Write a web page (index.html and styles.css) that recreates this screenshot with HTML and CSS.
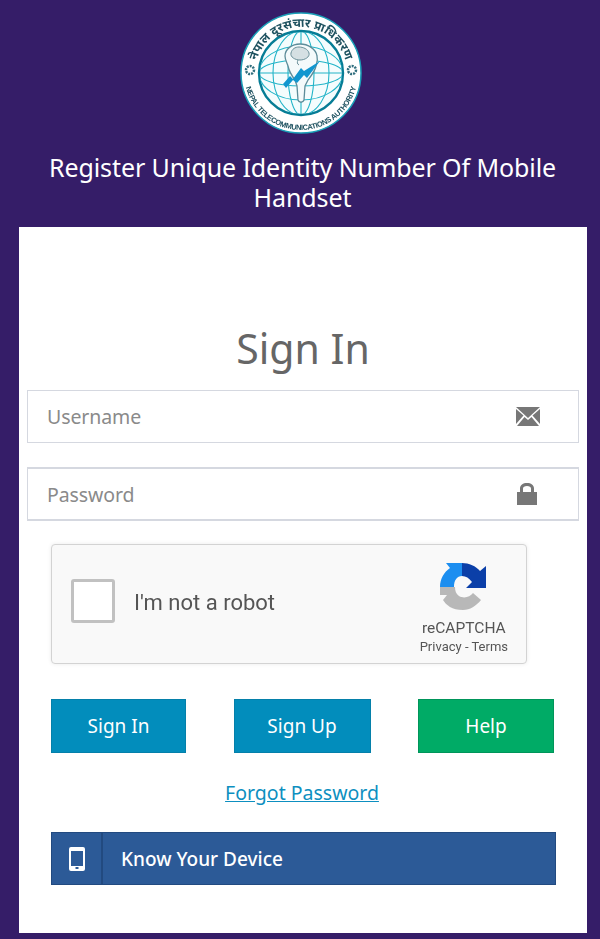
FILE: index.html
```html
<!DOCTYPE html>
<html lang="en">
<head>
<meta charset="utf-8">
<title>Sign In</title>
<link rel="stylesheet" href="styles.css">
</head>
<body>
<header class="top">
  <svg class="logo" viewBox="0 0 122 122" width="122" height="122">
    <defs>
      <path id="arcTop" d="M15 61a46 46 0 0 1 92 0"/>
      <path id="arcBot" d="M4 61a57 57 0 0 0 114 0"/>
      <clipPath id="globeClip"><circle cx="61" cy="61" r="41"/></clipPath>
    </defs>
    <circle cx="61" cy="61" r="60" fill="#fff" stroke="#1aa0b8" stroke-width="1.500"/>
    <circle cx="61" cy="61" r="42" fill="#f4fcfd" stroke="#067d96" stroke-width="2.400"/>
    <g clip-path="url(#globeClip)" fill="none" stroke="#22b4c8" stroke-width="1.100">
      <ellipse cx="61" cy="61" rx="42" ry="13"/>
      <ellipse cx="61" cy="61" rx="42" ry="27"/>
      <ellipse cx="61" cy="61" rx="13" ry="42"/>
      <ellipse cx="61" cy="61" rx="28" ry="42"/>
      <path d="M19 61h84M61 19v84"/>
    </g>
    <path d="M60 32c-8 0-15 5-15 12 0 4 2 7 3 10 1 5 4 10 7 14l2 6 1 14c1 3 5 3 6 0l1-14 3-6c3-4 7-9 8-14 1-4 2-6 1-10-1-7-9-12-17-12z" fill="#f4fafb" stroke="#5d8c99" stroke-width="1.300"/>
    <path d="M51 41c1-4 4-6 8-6s9 2 10 6c1 4-4 7-9 7s-10-3-9-7z" fill="#d5e0e3" stroke="#6a8f98"/>
    <path d="M58 48c-1 2-1 4 1 5" fill="none" stroke="#6a8f98"/>
    <path d="M43 72l7-8 3 3 8-11 3 3 16-10-13 17-3-3-7 8-4-3-7 8z" fill="#1196cf"/>
    <text class="logo-hi"><textPath href="#arcTop" startOffset="50%" text-anchor="middle">नेपाल दूरसंचार प्राधिकरण</textPath></text>
    <text class="logo-en"><textPath href="#arcBot" startOffset="50%" text-anchor="middle" textLength="150" lengthAdjust="spacing">NEPAL TELECOMMUNICATIONS AUTHORITY</textPath></text>
    <circle class="rosette" cx="10" cy="58" r="4"/>
    <circle class="rosette" cx="112" cy="58" r="4"/>
  </svg>
  <h1 class="site-title">Register Unique Identity Number Of Mobile Handset</h1>
</header>
<main class="card">
  <h2 class="heading">Sign In</h2>
  <div class="field">
    <span class="placeholder">Username</span>
    <svg class="field-icon" viewBox="0 0 24 19" width="24" height="19"><path fill="#777" d="M0 0h24L12 11zM0 2l7.500 6.500L0 17zM24 2l-7.500 6.500L24 17zM8.500 10l3.500 3 3.500-3 7.500 9H1z"/></svg>
  </div>
  <div class="field field-thick">
    <span class="placeholder">Password</span>
    <svg class="field-icon" viewBox="0 0 20 22" width="20" height="22"><path fill="#777" d="M0 9h20v13H0zM3 9V5.500C3 2 6 0 10 0s7 2 7 5.500V9h-3V5.500C14 4 12.500 3 10 3S6 4 6 5.500V9z"/></svg>
  </div>
  <div class="captcha">
    <span class="checkbox"></span>
    <span class="captcha-label">I'm not a robot</span>
    <div class="captcha-brand">
      <svg class="captcha-logo" viewBox="0 0 48 48" width="48" height="48">
        <path fill="#1c8ef0" d="M0 24C0 16 4 9 10 5L6 0H22V13C17 13 14 17 14 24Z"/>
        <path fill="#0b3fa8" d="M22 0C29 0 36 3 40 8L46 3V25H26L32 19C29 15 26 13 22 13Z"/>
        <path fill="#b8b8b8" d="M0 24H15C15 28 16 31 19 33C24 36 30 34 33 30L41 37C36 43 30 47 23 47C12 47 6 42 3 37L7 32H0Z"/>
      </svg>
      <span class="brand-name">reCAPTCHA</span>
      <span class="brand-links">Privacy - Terms</span>
    </div>
  </div>
  <div class="actions">
    <a class="btn btn-blue btn-a" href="#">Sign In</a>
    <a class="btn btn-blue btn-b" href="#">Sign Up</a>
    <a class="btn btn-green btn-c" href="#">Help</a>
  </div>
  <a class="forgot" href="#">Forgot Password</a>
  <a class="device" href="#">
    <span class="device-icon">
      <svg viewBox="0 0 16 24" width="16" height="24"><path fill="#fff" fill-rule="evenodd" d="M2 0h12a2 2 0 0 1 2 2v20a2 2 0 0 1-2 2H2a2 2 0 0 1-2-2V2a2 2 0 0 1 2-2zM2 4v15h12V4zM6.500 20v2h3v-2z"/></svg>
    </span>
    <span class="device-label">Know Your Device</span>
  </a>
</main>
</body>
</html>
```
FILE: styles.css
```css
* { box-sizing: border-box; }
html, body { margin: 0; padding: 0; }
body {
  width: 600px;
  height: 939px;
  background: #351d68;
  font-family: "Noto Sans", "Open Sans", sans-serif;
  overflow: hidden;
}
.top {
  height: 227px;
  padding-top: 12px;
  display: flex;
  flex-direction: column;
  align-items: center;
}
.logo {
  display: block;
  margin-left: 2px;
  filter: blur(0.4px);
}
.logo-hi { font: 700 12px "Noto Sans", "Noto Sans CJK SC", sans-serif; fill: #1f5260; }
.logo-en { font: 700 7.500px "Liberation Sans", sans-serif; fill: #1f5260; }
.rosette { fill: none; stroke: #2f6d7d; stroke-width: 2.500; stroke-dasharray: 2 1; }
.site-title {
  margin: 18px 0 0 5px;
  width: 530px;
  font-size: 25px;
  font-weight: 400;
  line-height: 30px;
  color: #fff;
  text-align: center;
  letter-spacing: -0.1px;
}
.card {
  width: 568px;
  height: 706px;
  margin-left: 19px;
  padding: 91px 8px 0;
  background: #fff;
}
.heading {
  margin: 0 0 12px;
  height: 60px;
  font-size: 41px;
  font-weight: 400;
  line-height: 60px;
  color: #666;
  text-align: center;
}
.field {
  display: flex;
  align-items: center;
  justify-content: space-between;
  height: 53px;
  padding: 0 38px 0 19px;
  border: 1px solid #d5d8e0;
  margin-bottom: 24px;
}
.field-thick {
  height: 54px;
  border-width: 2px 1px;
  margin-bottom: 23px;
  padding-right: 41px;
}
.placeholder { font-size: 19.500px; color: #8a8a8a; letter-spacing: -0.1px; }
.field-icon { display: block; }
.captcha {
  display: flex;
  align-items: center;
  width: 476px;
  height: 120px;
  margin-left: 24px;
  padding: 0 0 6px 19px;
  background: #f9f9f9;
  border: 1px solid #d3d3d3;
  border-radius: 4px;
  box-shadow: 0 0 4px rgba(0,0,0,.08);
  filter: blur(0.3px);
}
.checkbox {
  width: 44px;
  height: 44px;
  background: #fff;
  border: 3px solid #c1c1c1;
  border-radius: 3px;
}
.captcha-label {
  margin: 3px 0 0 19px;
  font: 400 22px Roboto, sans-serif;
  color: #555;
}
.captcha-brand {
  display: flex;
  flex-direction: column;
  align-items: center;
  margin: 18px 0 0 auto;
  padding-right: 18px;
  color: #555;
}
.captcha-logo { display: block; margin-bottom: 8px; }
.brand-name { font: 400 15.500px Roboto, sans-serif; line-height: 18px; }
.brand-links { font: 400 13px Roboto, sans-serif; line-height: 20px; }
.actions {
  display: flex;
  justify-content: space-between;
  width: 503px;
  margin: 35px 0 0 24px;
}
.btn {
  display: flex;
  align-items: center;
  justify-content: center;
  height: 54px;
  font-size: 19px;
  color: #fff;
  text-decoration: none;
}
.btn-a { width: 135px; }
.btn-b { width: 137px; }
.btn-c { width: 136px; }
.btn-blue { background: #028dbc; border: 1px solid #0480aa; }
.btn-green { background: #00ab66; border: 1px solid #00955a; }
.forgot {
  display: block;
  margin: 26px 0 0 14px;
  width: 522px;
  font-size: 19.500px;
  line-height: 28px;
  color: #0d8fc0;
  text-align: center;
}
.device {
  display: flex;
  align-items: stretch;
  width: 505px;
  height: 53px;
  margin: 25px 0 0 24px;
  background: #2c5a97;
  border: 1px solid #224a80;
  color: #fff;
  text-decoration: none;
}
.device-icon {
  display: flex;
  align-items: center;
  justify-content: center;
  width: 51px;
  border-right: 2px solid #224a80;
}
.device-label {
  align-self: center;
  margin-left: 18px;
  font-size: 19px;
  font-weight: 500;
}
```
